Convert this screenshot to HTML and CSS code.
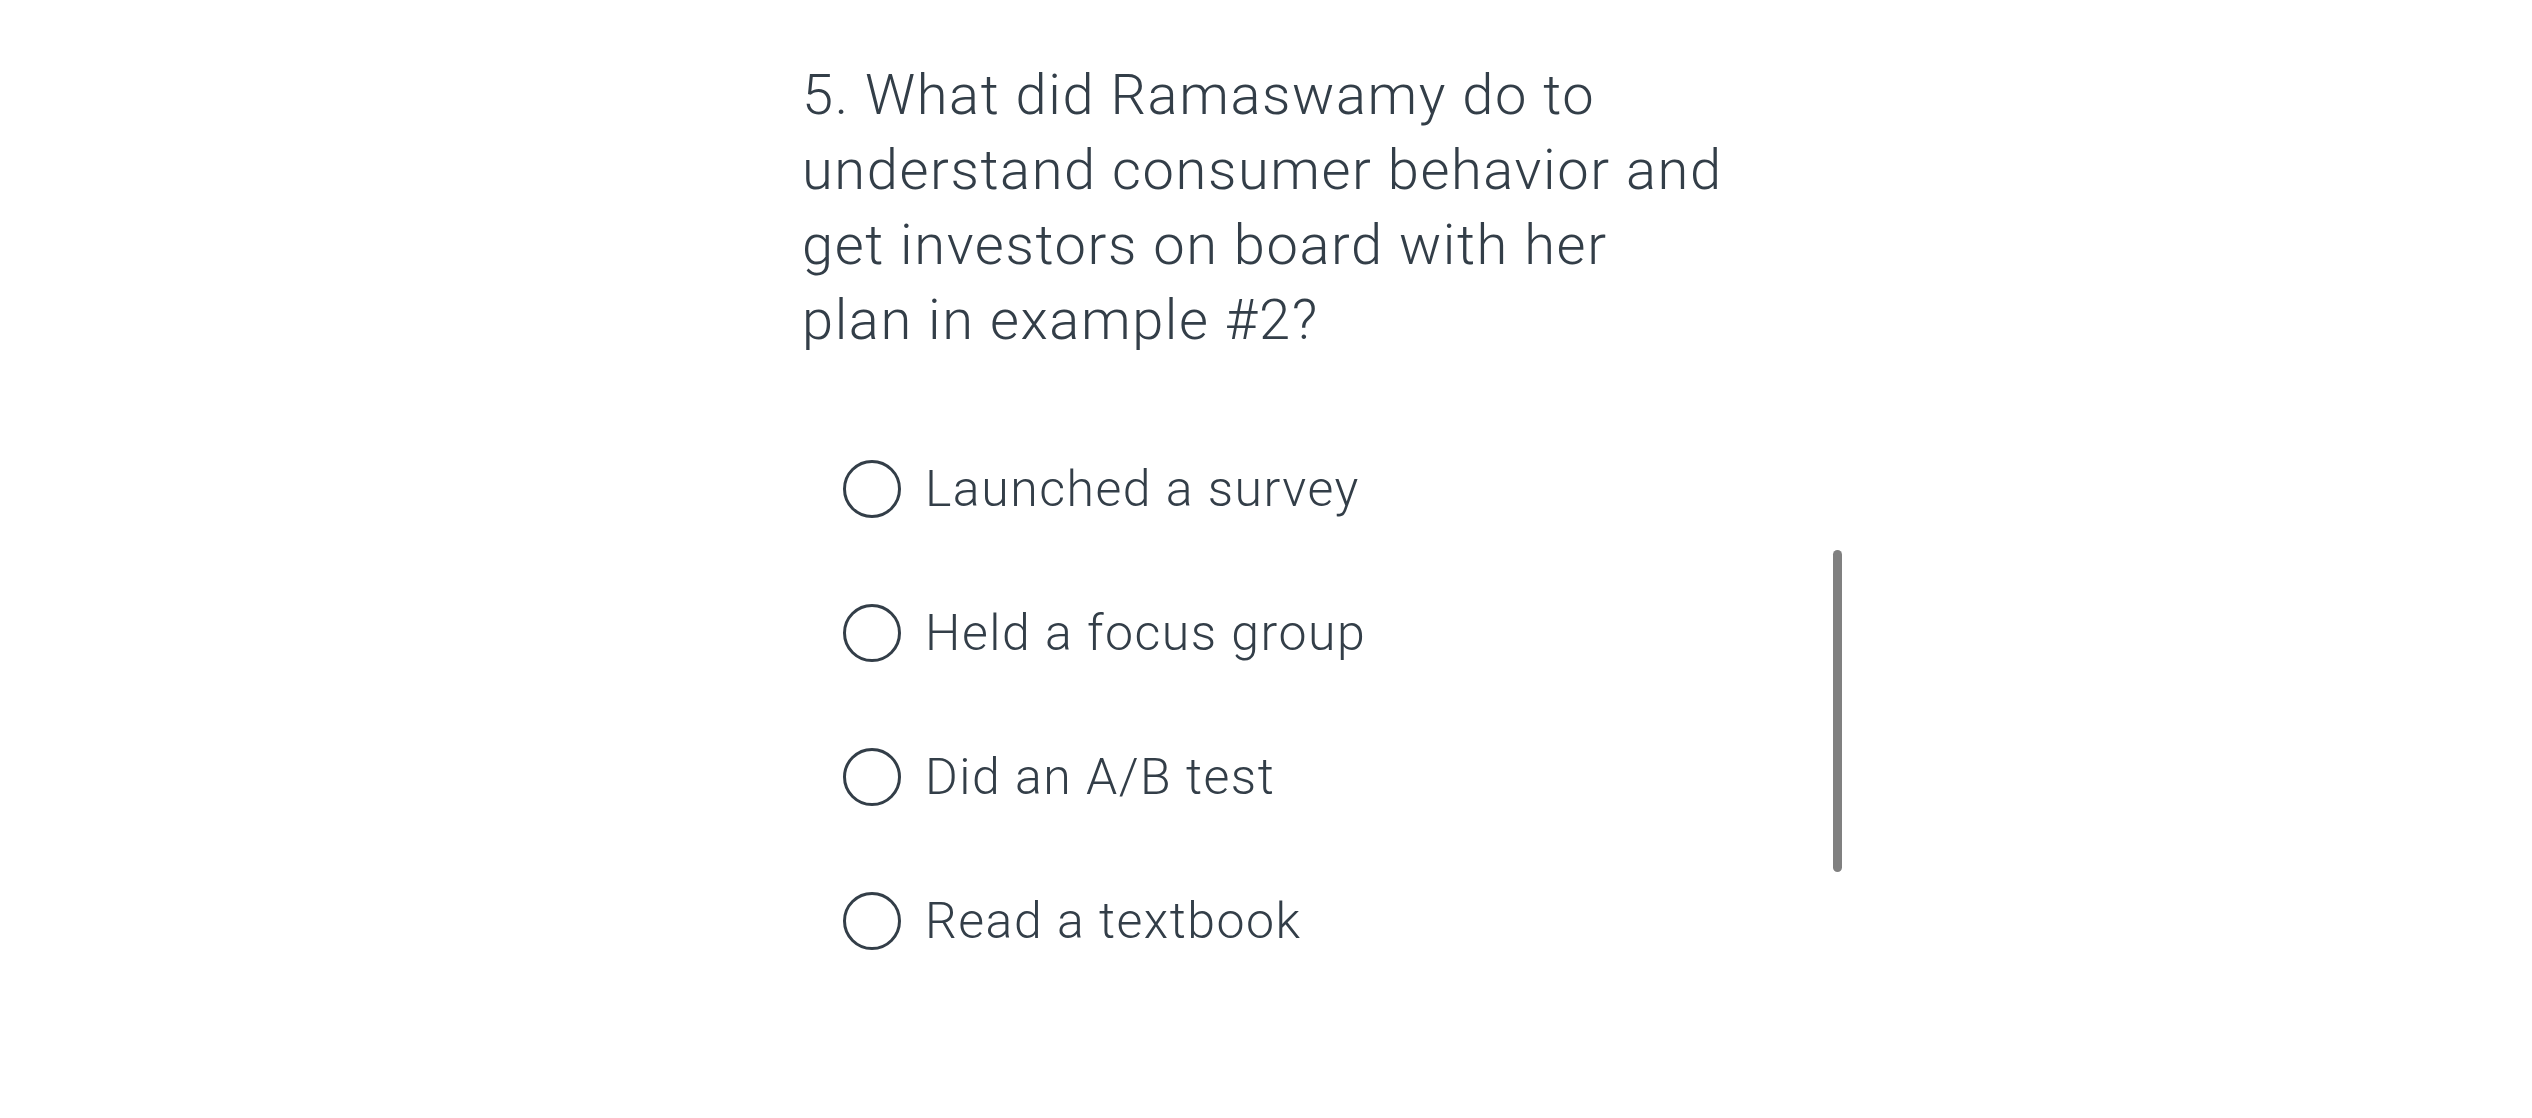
FILE: index.html
```html
<!DOCTYPE html>
<html lang="en">
<head>
<meta charset="utf-8">
<title>Question 5</title>
<link rel="stylesheet" href="styles.css">
</head>
<body>
<main class="page">
  <section class="question">
    <h2 class="question-title">5. What did Ramaswamy do to understand consumer behavior and get investors on board with her plan in example #2?</h2>
    <ul class="options">
      <li class="option"><span class="radio"></span><span class="label">Launched a survey</span></li>
      <li class="option"><span class="radio"></span><span class="label">Held a focus group</span></li>
      <li class="option"><span class="radio"></span><span class="label">Did an A/B test</span></li>
      <li class="option"><span class="radio"></span><span class="label">Read a textbook</span></li>
    </ul>
  </section>
</main>
<div class="scroll-thumb"></div>
</body>
</html>
```

FILE: styles.css
```css
html, body {
  margin: 0;
  padding: 0;
  background: #ffffff;
}
body {
  width: 2532px;
  height: 1118px;
  overflow: hidden;
  position: relative;
  font-family: Roboto, "Liberation Sans", sans-serif;
  color: #333e48;
}
.page {
  display: flex;
  justify-content: center;
  padding-top: 58px;
}
.question {
  width: 928px;
}
.question-title {
  margin: 0;
  max-width: 922px;
  font-size: 56px;
  font-weight: 300;
  line-height: 75px;
  letter-spacing: 1.6px;
}
.options {
  list-style: none;
  margin: 102px 0 0 0;
  padding: 0 0 0 41px;
  display: flex;
  flex-direction: column;
  gap: 86px;
}
.option {
  display: flex;
  align-items: center;
  gap: 24px;
  height: 58px;
}
.radio {
  box-sizing: border-box;
  width: 58px;
  height: 58px;
  border: 3px solid #333e48;
  border-radius: 50%;
  flex: none;
}
.label {
  font-size: 50px;
  font-weight: 300;
  line-height: 58px;
  letter-spacing: 1.5px;
}
.scroll-thumb {
  position: absolute;
  left: 1833px;
  top: 550px;
  width: 9px;
  height: 322px;
  border-radius: 5px;
  background: #808080;
}
```
